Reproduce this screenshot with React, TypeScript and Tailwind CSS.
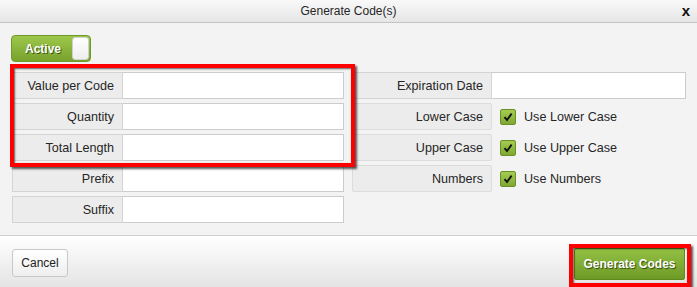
import React from "react";

const font = "font-['Liberation_Sans',Arial,sans-serif]";

function Field({ label, labelW }: { label: string; labelW: string }) {
  return (
    <div className="flex h-[27px]">
      <div
        className={`${labelW} flex shrink-0 items-center justify-end border border-[#d4d4d4] bg-[#ececec] pr-[8px] pt-px text-[12.6px] text-[#262626]`}
      >
        {label}
      </div>
      <div className="flex-1 border border-l-0 border-[#cccccc] bg-white" />
    </div>
  );
}

function CheckRow({ label, text }: { label: string; text: string }) {
  return (
    <div className="flex h-[27px] items-center">
      <div className="flex h-full w-[140px] shrink-0 items-center justify-end rounded-[2px] border border-[#dcdcdc] bg-[#ececec] pr-[8px] pt-px text-[12.6px] text-[#262626]">
        {label}
      </div>
      <div className="ml-[8px] flex h-[16px] w-[16px] items-center justify-center rounded-[2px] border border-[#6c8f25] bg-gradient-to-b from-[#a4cc52] to-[#7fa832]">
        <svg width="10" height="10" viewBox="0 0 10 10">
          <path d="M1.5 5.2 L4 8 L8.6 1.6" fill="none" stroke="#111" strokeWidth="1.9" />
        </svg>
      </div>
      <span className="ml-[8px] pt-px text-[12.6px] text-[#262626]">{text}</span>
    </div>
  );
}

export default function App() {
  return (
    <div className={`relative h-[287px] w-[697px] overflow-hidden bg-[#f3f3f3] ${font}`}>
      {/* Title bar */}
      <div className="relative flex h-[23px] items-center justify-center border-b border-[#c4c4c4] bg-gradient-to-b from-[#f9f9f9] to-[#e5e5e5]">
        <span className="text-[12px] text-[#262626]">Generate Code(s)</span>
        <span className="absolute right-[7px] top-[2px] text-[15px] font-bold leading-[18px] text-[#111]">x</span>
      </div>

      {/* Body */}
      <div className="h-[212px] pl-[12px] pt-[12px]">
        <div className="-ml-px flex h-[27px] w-[80px] items-center rounded-[4px] border border-[#6f9a2b] bg-gradient-to-b from-[#9dc84b] to-[#78a22c] pl-[13px]">
          <span className="text-[12px] font-bold text-white [text-shadow:1px_1px_0_#3d5a10]">
            Active
          </span>
          <div className="ml-auto mr-px h-[23px] w-[17px] rounded-[3px] border border-[#d0d0d0] bg-gradient-to-b from-white to-[#eeeeee]" />
        </div>

        <div className="mt-[10px] flex gap-[8px]">
          <div className="flex w-[332px] flex-col gap-[4px]">
            <Field label="Value per Code" labelW="w-[111px]" />
            <Field label="Quantity" labelW="w-[111px]" />
            <Field label="Total Length" labelW="w-[111px]" />
            <Field label="Prefix" labelW="w-[111px]" />
            <Field label="Suffix" labelW="w-[111px]" />
          </div>
          <div className="flex w-[334px] flex-col gap-[4px]">
            <Field label="Expiration Date" labelW="w-[140px]" />
            <CheckRow label="Lower Case" text="Use Lower Case" />
            <CheckRow label="Upper Case" text="Use Upper Case" />
            <CheckRow label="Numbers" text="Use Numbers" />
          </div>
        </div>
      </div>

      {/* Footer */}
      <div className="flex h-[52px] items-start justify-between border-t border-[#cfcfcf] bg-gradient-to-b from-white to-[#e4e4e4] pl-[12px] pr-[12px]">
        <button className="mt-[13px] h-[28px] w-[56px] rounded-[3px] border border-[#c8c8c8] bg-gradient-to-b from-white to-[#eeeeee] text-[12px] text-[#222]">
          Cancel
        </button>
        <button className="mt-[12px] h-[32px] w-[111px] rounded-[2px] border border-[#5e8a1c] bg-gradient-to-b from-[#93c043] to-[#6e9a27] text-[12px] font-bold text-white [text-shadow:1px_1px_1px_#2f4a0a]">
          Generate Codes
        </button>
      </div>

      {/* Annotation boxes */}
      <div className="pointer-events-none absolute left-[10px] top-[64px] h-[103px] w-[345px] border-[4px] border-[#ff0000] shadow-[2px_2px_2px_rgba(0,0,0,0.65),inset_1px_1px_2px_rgba(0,0,0,0.6)]" />
      <div className="pointer-events-none absolute left-[569px] top-[244px] h-[43px] w-[122px] border-[4px] border-[#ff0000] shadow-[2px_2px_2px_rgba(0,0,0,0.65),inset_1px_1px_2px_rgba(0,0,0,0.6)]" />
    </div>
  );
}
